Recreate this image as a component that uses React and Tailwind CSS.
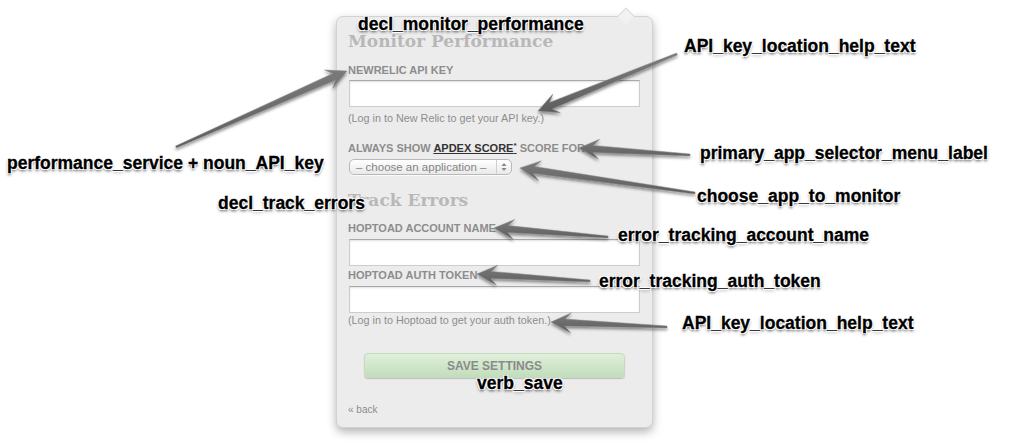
import React from "react";

const notes = [
  { text: "decl_monitor_performance", left: 358, top: 14 },
  { text: "API_key_location_help_text", left: 684, top: 36 },
  { text: "primary_app_selector_menu_label", left: 700, top: 143 },
  { text: "choose_app_to_monitor", left: 697, top: 186 },
  { text: "performance_service + noun_API_key", left: 7, top: 153 },
  { text: "decl_track_errors", left: 218, top: 193 },
  { text: "error_tracking_account_name", left: 618, top: 225 },
  { text: "error_tracking_auth_token", left: 599, top: 271 },
  { text: "API_key_location_help_text", left: 682, top: 313 },
  { text: "verb_save", left: 477, top: 373 },
];

// tail -> tip
const arrows = [
  [176, 147, 347, 71],
  [677, 54, 538, 111],
  [690, 155, 579, 148],
  [695, 193, 520, 168],
  [608, 237, 494, 228],
  [590, 281, 477, 274],
  [667, 327, 551, 322],
];

function arrowPoints(tx, ty, px, py) {
  const len = Math.hypot(px - tx, py - ty);
  const dx = (px - tx) / len;
  const dy = (py - ty) / len;
  const nx = -dy;
  const ny = dx;
  const neckX = px - dx * 14;
  const neckY = py - dy * 14;
  const barbX = px - dx * 20;
  const barbY = py - dy * 20;
  const pts = [
    [tx + nx * 1, ty + ny * 1],
    [neckX + nx * 3.5, neckY + ny * 3.5],
    [barbX + nx * 10, barbY + ny * 10],
    [px, py],
    [barbX - nx * 10, barbY - ny * 10],
    [neckX - nx * 3.5, neckY - ny * 3.5],
    [tx - nx * 1, ty - ny * 1],
  ];
  return pts.map((p) => p.map((v) => v.toFixed(1)).join(",")).join(" ");
}

const label =
  "text-[11px] leading-[12px] font-bold uppercase text-[#8c8c8c] font-['Liberation_Sans',Arial,sans-serif]";
const help =
  "text-[10.8px] leading-[12px] text-[#8c8c8c] font-['Liberation_Sans',Arial,sans-serif]";
const heading =
  "text-[17px] leading-[20px] font-bold text-[#b8b8b8] font-['DejaVu_Serif',Georgia,serif]";
const input =
  "h-[27px] w-[291px] ml-[1px] bg-white border border-[#cdcdcd] border-t-[#a8a8a8] shadow-[inset_0_1px_2px_rgba(0,0,0,0.12)]";

function Chevrons() {
  return (
    <svg width="8" height="10" viewBox="0 0 8 10">
      <path d="M4 1 L6.5 4 L1.5 4 Z" fill="#888" />
      <path d="M4 9 L6.5 6 L1.5 6 Z" fill="#888" />
    </svg>
  );
}

export default function App() {
  return (
    <div className="relative w-[1035px] h-[448px] bg-white overflow-hidden">
      {/* SETTINGS PANEL */}
      <div className="relative ml-[336px] mt-[16px] w-[317px] bg-[#ececec] border border-[#d2d2d2] rounded-[7px] shadow-[0_4px_10px_rgba(0,0,0,0.3)] pt-[14px] pb-[11px] pl-[11px]">
        <div className="absolute -top-[7px] left-[283px] w-[12px] h-[12px] rotate-45 bg-[#f2f2f2] border-t border-l border-[#dadada]" />

        <div className={heading}>Monitor Performance</div>

        <div className={`${label} mt-[13px]`}>Newrelic API Key</div>
        <div className={`${input} mt-[4px]`} />
        <div className={`${help} mt-[5px]`}>(Log in to New Relic to get your API key.)</div>

        <div className={`${label} mt-[18px]`}>
          Always show{" "}
          <span className="text-[#333] underline">
            Apdex Score<sup className="text-[8px]">*</sup>
          </span>{" "}
          score for:
        </div>
        <div className="mt-[5px] ml-[1px] w-[163px] h-[16px] flex items-center rounded-[5px] border border-[#b9b9b9] bg-gradient-to-b from-white to-[#e9e9e9] shadow-[0_1px_0_rgba(255,255,255,0.8)]">
          <span className="flex-1 pl-[6px] whitespace-nowrap text-[11.5px] leading-[14px] text-[#858585] font-['Liberation_Sans',Arial,sans-serif]">
            – choose an application –
          </span>
          <span className="h-full w-[15px] border-l border-[#d0d0d0] flex items-center justify-center">
            <Chevrons />
          </span>
        </div>

        <div className={`${heading} mt-[15px]`}>Track Errors</div>

        <div className={`${label} mt-[12px]`}>Hoptoad Account Name</div>
        <div className={`${input} mt-[5px]`} />

        <div className={`${label} mt-[3px]`}>Hoptoad Auth Token</div>
        <div className={`${input} mt-[5px]`} />
        <div className={`${help} mt-[1px]`}>(Log in to Hoptoad to get your auth token.)</div>

        <div className="mt-[27px] ml-[16px] w-[261px] h-[25px] flex items-center justify-center rounded-[4px] border border-[#c6d9c1] bg-gradient-to-b from-[#dff0da] to-[#c2ddbb] shadow-[0_1px_1px_rgba(0,0,0,0.2)]">
          <span className="text-[12px] font-bold text-[#8a8a8a] font-['Liberation_Sans',Arial,sans-serif]">
            SAVE SETTINGS
          </span>
        </div>

        <div className={`${help} mt-[26px] text-[10px]`}>« back</div>
      </div>

      {/* ARROWS */}
      <svg className="absolute inset-0" width="1035" height="448">
        <defs>
          <filter id="sh" x="-20%" y="-20%" width="140%" height="140%">
            <feDropShadow dx="0" dy="2" stdDeviation="1.5" floodColor="#000" floodOpacity="0.45" />
          </filter>
          <linearGradient id="ag" x1="0" y1="0" x2="0" y2="1">
            <stop offset="0" stopColor="#7a7a7a" />
            <stop offset="1" stopColor="#5e5e5e" />
          </linearGradient>
        </defs>
        {arrows.map(([tx, ty, px, py], i) => (
          <polygon
            key={i}
            points={arrowPoints(tx, ty, px, py)}
            fill="url(#ag)"
            stroke="#8a8a8a"
            strokeWidth="0.5"
            filter="url(#sh)"
          />
        ))}
      </svg>

      {/* ANNOTATIONS */}
      {notes.map((n, i) => (
        <div
          key={i}
          className="absolute whitespace-nowrap text-[17.5px] leading-[20px] font-bold text-black font-['Liberation_Sans',Arial,sans-serif] [-webkit-text-stroke:0.3px_#000] [text-shadow:1px_1px_0_#fff,-1px_-1px_0_#fff,1px_-1px_0_#fff,-1px_1px_0_#fff,0_1px_0_#fff,0_-1px_0_#fff,1px_0_0_#fff,-1px_0_0_#fff,0_2px_3px_rgba(0,0,0,0.7)]"
          style={{ left: n.left, top: n.top }}
        >
          {n.text}
        </div>
      ))}
    </div>
  );
}
